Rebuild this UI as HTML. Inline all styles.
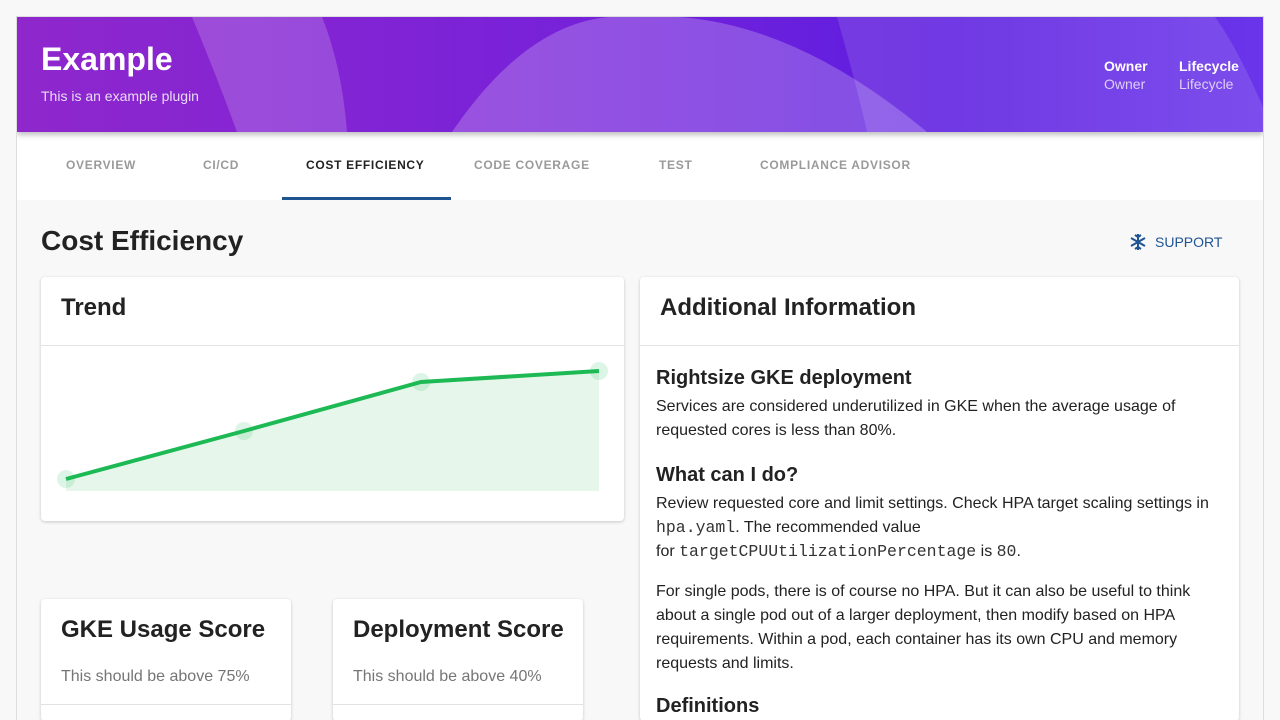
<!DOCTYPE html>
<html><head><meta charset="utf-8"><style>
*{box-sizing:border-box;margin:0;padding:0}
html,body{width:1280px;height:720px;overflow:hidden}
body{background:#f8f8f8;font-family:"Liberation Sans",sans-serif;color:#222;position:relative}
.frame{position:absolute;left:16px;top:16px;width:1248px;height:704px;border:1px solid #ddd;border-bottom:none;background:#f8f8f8;overflow:hidden}
.hdr{position:absolute;left:0;top:0;width:1246px;height:115px;background:linear-gradient(90deg,#8f27cc 0%,#7a22d8 40%,#5d1ee0 75%,#6a35ea 100%);overflow:hidden;box-shadow:0 3px 5px rgba(0,0,0,.25);z-index:2}
.hdr h1{position:absolute;left:24px;top:24px;font-size:32px;color:#fff;font-weight:bold}
.hdr p{position:absolute;left:24px;top:71px;font-size:14px;color:#e8dcf5}
.meta{position:absolute;top:41px;color:#fff;font-size:14px}
.meta b{display:block;margin-bottom:2px}.meta span{color:#ddd0f5}
.tabs{position:absolute;left:0;top:115px;width:1246px;height:68px;background:#fff}
.tab{position:absolute;top:26px;font-size:12px;font-weight:bold;letter-spacing:.7px;color:#9a9a9a}
.card{position:absolute;background:#fff;box-shadow:0 1px 3px rgba(0,0,0,.2);border-radius:4px}
.ch{font-size:24px;font-weight:bold;padding:17px 20px 23px;white-space:nowrap}
.sep{border-top:1px solid #e2e2e2}
.ai h3{font-size:20px;font-weight:bold;margin:20px 0 5px}
.ai p{font-size:16px;line-height:24px;color:#222}
code{font-family:"Liberation Mono",monospace;font-size:16.5px;color:#333}
</style></head><body>
<div class="frame">
<div class="hdr">
<svg width="1246" height="115" style="position:absolute;left:0;top:0">
<path d="M175 0 Q200 60 220 115 L330 115 Q325 50 305 0Z" fill="rgba(255,255,255,.18)"/>
<path d="M435 115 Q520 -10 620 0 Q760 -10 910 115Z" fill="rgba(255,255,255,.22)"/>
<path d="M820 0 Q840 70 850 115 L1246 115 L1246 90 Q1220 30 1198 0Z" fill="rgba(255,255,255,.12)"/>
</svg>
<h1>Example</h1><p>This is an example plugin</p>
<div class="meta" style="left:1087px"><b>Owner</b><span>Owner</span></div>
<div class="meta" style="left:1162px"><b>Lifecycle</b><span>Lifecycle</span></div>
</div>
<div class="tabs">
<div class="tab" style="left:49px">OVERVIEW</div>
<div class="tab" style="left:186px">CI/CD</div>
<div class="tab" style="left:289px;color:#222">COST EFFICIENCY</div>
<div class="tab" style="left:457px">CODE COVERAGE</div>
<div class="tab" style="left:642px">TEST</div>
<div class="tab" style="left:743px">COMPLIANCE ADVISOR</div>
<div style="position:absolute;left:265px;top:65px;width:169px;height:3px;background:#1f5493"></div>
</div>
<div style="position:absolute;left:24px;top:208px;font-size:28px;font-weight:bold">Cost Efficiency</div>
<div style="position:absolute;left:1112px;top:216px;color:#1f5493;font-size:14px;display:flex;align-items:center;gap:8px">
<svg width="18" height="18" viewBox="0 0 18 18" stroke="#1f5493" stroke-width="2" fill="none"><path d="M9 1V17M2 5L16 13M2 13L16 5M6 2L9 4L12 2M6 16L9 14L12 16"/></svg>SUPPORT</div>
<div class="card" style="left:24px;top:260px;width:583px;height:244px">
<div class="ch">Trend</div><div class="sep"></div>
<svg width="583" height="175" style="position:absolute;left:0;top:69px">
<path d="M25 133L203 85L380 36L558 25L558 145L25 145Z" fill="#e6f6ea"/>
<path d="M25 133L203 85L380 36L558 25" stroke="#1db954" stroke-width="4" fill="none"/>
<g fill="rgba(29,185,84,.15)"><circle cx="25" cy="133" r="9"/><circle cx="203" cy="85" r="9"/><circle cx="380" cy="36" r="9"/><circle cx="558" cy="25" r="9"/></g>
</svg></div>
<div class="card" style="left:24px;top:582px;width:250px;height:122px">
<div class="ch" style="padding-bottom:0">GKE Usage Score</div>
<div style="padding:0 20px;font-size:16px;color:#757575;margin-top:24px">This should be above 75%</div>
<div class="sep" style="margin-top:18px"></div></div>
<div class="card" style="left:316px;top:582px;width:250px;height:122px">
<div class="ch" style="padding-bottom:0">Deployment Score</div>
<div style="padding:0 20px;font-size:16px;color:#757575;margin-top:24px">This should be above 40%</div>
<div class="sep" style="margin-top:18px"></div></div>
<div class="card ai" style="left:623px;top:260px;width:599px;height:444px;overflow:hidden">
<div class="ch">Additional Information</div><div class="sep"></div>
<div style="padding:0 16px">
<h3 style="margin-top:21px">Rightsize GKE deployment</h3>
<p>Services are considered underutilized in GKE when the average usage of requested cores is less than 80%.</p>
<h3 style="margin-top:21px">What can I do?</h3>
<p>Review requested core and limit settings. Check HPA target scaling settings in <code>hpa.yaml</code>. The recommended value<br>for <code>targetCPUUtilizationPercentage</code> is <code>80</code>.</p>
<p style="margin-top:16px">For single pods, there is of course no HPA. But it can also be useful to think about a single pod out of a larger deployment, then modify based on HPA requirements. Within a pod, each container has its own CPU and memory requests and limits.</p>
<h3 style="margin-top:19px">Definitions</h3>
</div></div>
</div>
</body></html>
